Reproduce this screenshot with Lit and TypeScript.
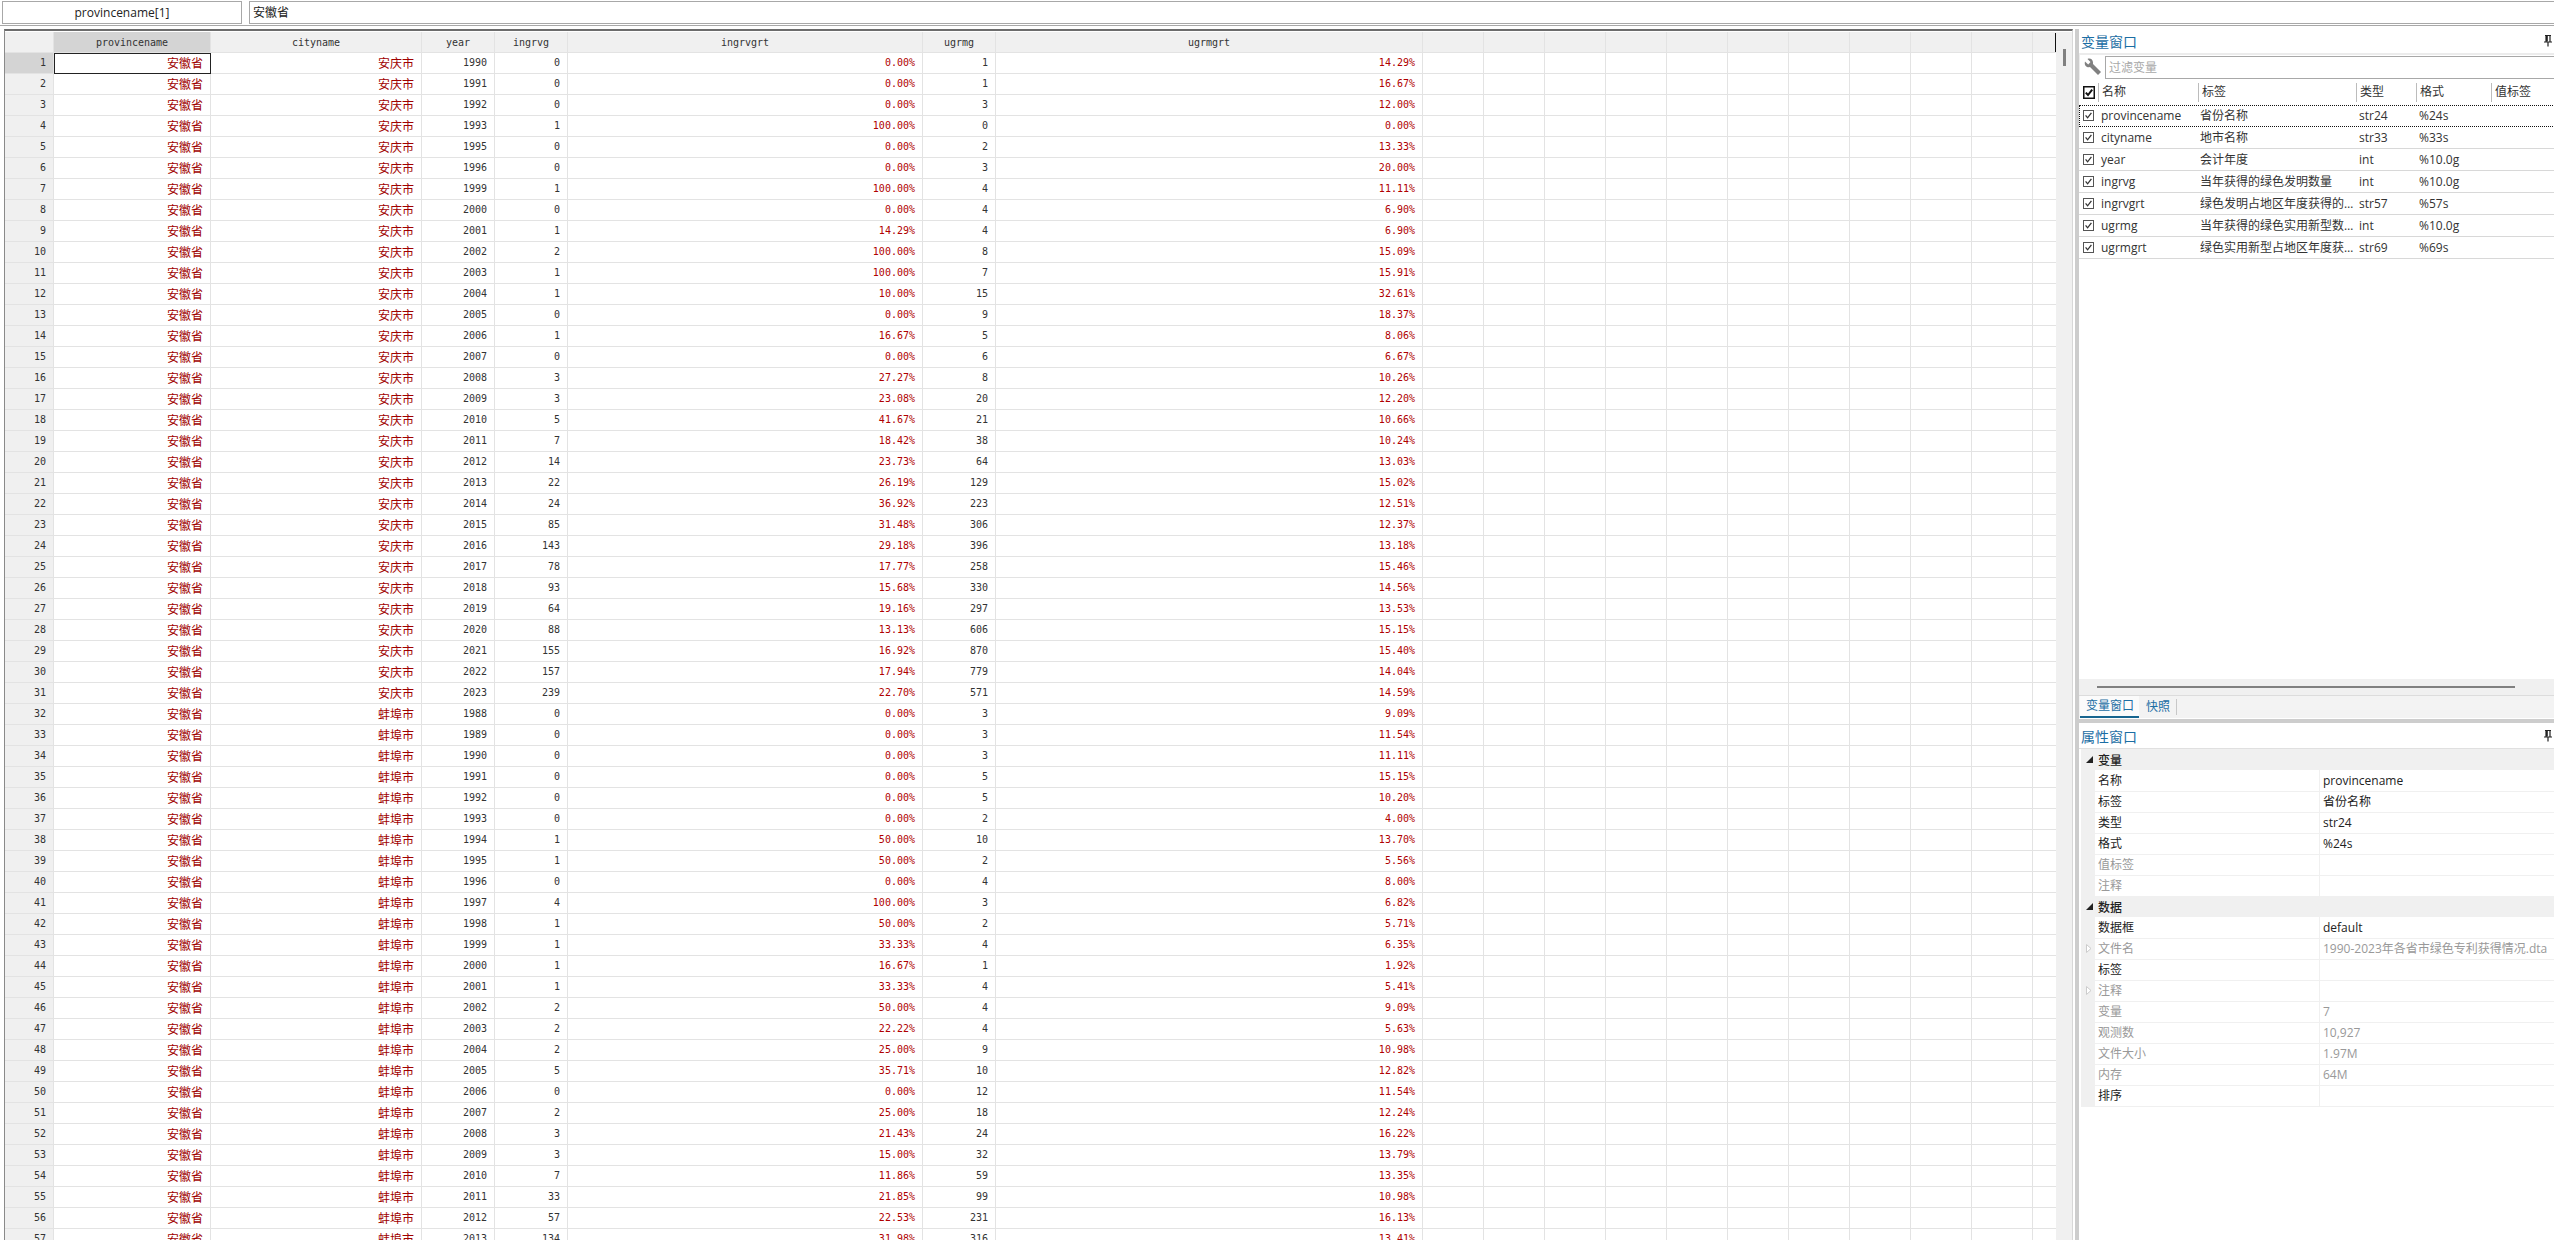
import { LitElement, html, css, svg } from "lit";
import { customElement } from "lit/decorators.js";

const raw = `1990 0 0.00 1 14.29|1991 0 0.00 1 16.67|1992 0 0.00 3 12.00|1993 1 100.00 0 0.00|1995 0 0.00 2 13.33|1996 0 0.00 3 20.00|1999 1 100.00 4 11.11|2000 0 0.00 4 6.90|2001 1 14.29 4 6.90|2002 2 100.00 8 15.09|2003 1 100.00 7 15.91|2004 1 10.00 15 32.61|2005 0 0.00 9 18.37|2006 1 16.67 5 8.06|2007 0 0.00 6 6.67|2008 3 27.27 8 10.26|2009 3 23.08 20 12.20|2010 5 41.67 21 10.66|2011 7 18.42 38 10.24|2012 14 23.73 64 13.03|2013 22 26.19 129 15.02|2014 24 36.92 223 12.51|2015 85 31.48 306 12.37|2016 143 29.18 396 13.18|2017 78 17.77 258 15.46|2018 93 15.68 330 14.56|2019 64 19.16 297 13.53|2020 88 13.13 606 15.15|2021 155 16.92 870 15.40|2022 157 17.94 779 14.04|2023 239 22.70 571 14.59|1988 0 0.00 3 9.09|1989 0 0.00 3 11.54|1990 0 0.00 3 11.11|1991 0 0.00 5 15.15|1992 0 0.00 5 10.20|1993 0 0.00 2 4.00|1994 1 50.00 10 13.70|1995 1 50.00 2 5.56|1996 0 0.00 4 8.00|1997 4 100.00 3 6.82|1998 1 50.00 2 5.71|1999 1 33.33 4 6.35|2000 1 16.67 1 1.92|2001 1 33.33 4 5.41|2002 2 50.00 4 9.09|2003 2 22.22 4 5.63|2004 2 25.00 9 10.98|2005 5 35.71 10 12.82|2006 0 0.00 12 11.54|2007 2 25.00 18 12.24|2008 3 21.43 24 16.22|2009 3 15.00 32 13.79|2010 7 11.86 59 13.35|2011 33 21.85 99 10.98|2012 57 22.53 231 16.13|2013 134 31.98 316 13.41`;
const rows = raw.split("|").map((r) => r.split(" "));
const headers = ["provincename", "cityname", "year", "ingrvg", "ingrvgrt", "ugrmg", "ugrmgrt"];
const blanks = Array.from({ length: 11 });

const vars = [
  ["provincename", "省份名称", "str24", "%24s"],
  ["cityname", "地市名称", "str33", "%33s"],
  ["year", "会计年度", "int", "%10.0g"],
  ["ingrvg", "当年获得的绿色发明数量", "int", "%10.0g"],
  ["ingrvgrt", "绿色发明占地区年度获得的专利比例", "str57", "%57s"],
  ["ugrmg", "当年获得的绿色实用新型数量合计", "int", "%10.0g"],
  ["ugrmgrt", "绿色实用新型占地区年度获得的比例", "str69", "%69s"],
];

type Prop = { k: string; v?: string; dim?: boolean; open?: boolean };
const varProps: Prop[] = [
  { k: "名称", v: "provincename" },
  { k: "标签", v: "省份名称" },
  { k: "类型", v: "str24" },
  { k: "格式", v: "%24s" },
  { k: "值标签", dim: true },
  { k: "注释", dim: true },
];
const dataProps: Prop[] = [
  { k: "数据框", v: "default" },
  { k: "文件名", v: "1990-2023年各省市绿色专利获得情况.dta", dim: true, open: true },
  { k: "标签" },
  { k: "注释", dim: true, open: true },
  { k: "变量", v: "7", dim: true },
  { k: "观测数", v: "10,927", dim: true },
  { k: "文件大小", v: "1.97M", dim: true },
  { k: "内存", v: "64M", dim: true },
  { k: "排序" },
];

const pin = svg`<path d="M2 0.5H8M3 1V6.500M7 1V6.500M1 7H9M5 7V11.500" fill="none" stroke="#222" stroke-width="1.200"/><rect x="3" y="1" width="1.800" height="5.500" fill="#222"/>`;

@customElement("app-root")
export class AppRoot extends LitElement {
  static styles = css`
    :host {
      display: block;
      width: 2554px;
      height: 1240px;
      overflow: hidden;
      background: #fff;
      font-family: "Open Sans", "Noto Sans CJK SC", sans-serif;
      font-size: 12px;
      color: #222;
    }
    * { box-sizing: border-box; }
    .cmd {
      display: flex;
      gap: 7px;
      height: 26px;
      padding: 1px 0 0 2px;
      border-bottom: 1px solid #a8a8a8;
    }
    .cmdname, .cmdval {
      height: 23px;
      border: 1px solid #a8a8a8;
      display: flex;
      align-items: center;
      line-height: 20px;
    }
    .cmdname { width: 240px; justify-content: center; }
    .cmdval { flex: 1; padding-left: 3px; border-right: 0; }
    .main { display: flex; height: 1214px; padding-top: 3px; }

    .gridwrap {
      width: 2069px;
      margin-left: 4px;
      flex: none;
      display: flex;
      border-top: 2px solid #6c6c6c;
      border-left: 1px solid #8a8a8a;
      border-right: 1px solid #d8d8d8;
      padding-top: 1px;
      overflow: hidden;
      height: 1211px;
    }
    .grid { width: 2050px; flex: none; }
    .row {
      display: grid;
      grid-template-columns: 49px 157px 211px 73px 73px 355px 73px 427px repeat(10, 61px) 23px;
      height: 21px;
    }
    .c {
      border-right: 1px solid #e3e3e3;
      border-bottom: 1px solid #e3e3e3;
      font: 10px/20px "DejaVu Sans Mono", monospace;
      padding-right: 7px;
      text-align: right;
      color: #333;
      white-space: nowrap;
      overflow: hidden;
    }
    .c:last-child { border-right: 0; }
    .cjk { font: 12px/20px "Noto Sans CJK SC", sans-serif; color: #a00000; }
    .pct { color: #b00000; }
    .hd { background: #f0f0f0; text-align: center; padding: 0; color: #333; }
    .rowno { background: #f0f0f0; }
    .sel { background: #d4d4d4; }
    .cur { outline: 1.5px solid #222; outline-offset: -1.5px; }
    .head { height: 21px; }
    .head .c { height: 21px; line-height: 21px; }
    .end { position: relative; }
    .end::after {
      content: "";
      position: absolute;
      right: 0;
      top: 1px;
      width: 1px;
      height: 19px;
      background: #111;
    }
    .vscroll { flex: 1; background: #f0f0f0; position: relative; margin-left: 1px; }
    .thumb { position: absolute; left: 7px; top: 17px; width: 3px; height: 17px; background: #808080; }

    .sash { width: 6px; flex: none; background: linear-gradient(to right, #fff 2px, #cdcdcd 2px); }

    .side { flex: 1; min-width: 0; display: flex; flex-direction: column; margin-top: -3px; }
    .vars { height: 669px; flex: none; display: flex; flex-direction: column; }
    .title {
      height: 27px;
      display: flex;
      align-items: center;
      justify-content: space-between;
      padding: 3px 1px 0 2px;
      font-size: 14px;
      color: #1c6ea4;
      flex: none;
    }
    .title svg { width: 10px; height: 12px; flex: none; }
    .filter {
      height: 27px;
      flex: none;
      display: flex;
      gap: 3px;
      padding: 1px 0 1px 4px;
      border-top: 2px solid #ececec;
      border-left: 1px solid #ececec;
    }
    .filter svg { width: 18px; height: 18px; margin-top: 2px; flex: none; }
    .input {
      flex: 1;
      border: 1px solid #a8a8a8;
      border-right: 0;
      padding-left: 3px;
      color: #a8a8a8;
      line-height: 21px;
    }
    .vhead, .vrow {
      display: grid;
      grid-template-columns: 19px 100px 158px 60px 75px 1fr;
    }
    .vhead { height: 25px; align-items: center; flex: none; padding-bottom: 1px; }
    .vhead .chk { padding-left: 4px; height: 19px; display: flex; align-items: center; }
    .vh { height: 19px; border-left: 1px solid #bcbcbc; padding-left: 3px; line-height: 18px; font-size: 12px; color: #333; }
    .vrow { height: 22px; align-items: center; border-bottom: 1px solid #d8d8d8; flex: none; color: #333; line-height: 20px; }
    .vrow.focus { outline: 1px dotted #111; outline-offset: -1px; margin-right: -3px; border-bottom-color: transparent; }
    .vrow .chk { padding-left: 4px; display: flex; align-items: center; }
    .vrow .name { padding-left: 3px; }
    .vrow .label { padding-left: 2px; white-space: nowrap; overflow: hidden; text-overflow: ellipsis; width: 156px; }
    .vrow .type { padding-left: 3px; }
    .vrow .fmt { padding-left: 3px; }
    .chk svg { display: block; }
    .vspacer { flex: 1; }
    .hscroll { height: 16px; flex: none; background: #f0f0f0; padding: 7px 39px 0 18px; }
    .hthumb { height: 2px; background: #808080; }
    .tabs {
      height: 24px;
      flex: none;
      display: flex;
      background: #f3f3f3;
      border-top: 1px solid #dcdcdc;
      border-bottom: 1px solid #fff;
      white-space: nowrap;
    }
    .tab { line-height: 20px; color: #1c6ea4; }
    .tab.on { width: 59px; margin-left: 1px; padding-left: 6px; background: #fbfbfb; border-bottom: 2px solid #17658f; }
    .tab.off { height: 16px; line-height: 16px; margin: 3px 0 0 1px; border-right: 1px solid #c8c8c8; padding: 0 6px; }
    .band { height: 4px; background: #cdcdcd; flex: none; }
    .props { flex: 1; display: flex; flex-direction: column; }
    .ptitle { height: 26px; padding-top: 0; border-bottom: 1px solid #e0e0e0; }
    .sec {
      height: 21px;
      display: flex;
      align-items: center;
      margin-left: 2px;
      padding-left: 5px;
      gap: 5px;
      background: #f0f0f0;
      color: #222;
      font-weight: 500;
    }
    .sec svg { width: 7px; height: 7px; flex: none; }
    .prow {
      display: grid;
      grid-template-columns: 14px 225px 1fr;
      height: 21px;
      margin-left: 2px;
      line-height: 21px;
    }
    .gut { background: #f0f0f0; padding: 6px 0 0 5px; }
    .gut svg { display: block; width: 6px; height: 9px; }
    .pk { padding-left: 3px; border-bottom: 1px solid #f0f0f0; border-right: 1px solid #f0f0f0; }
    .pv { padding-left: 3px; border-bottom: 1px solid #f0f0f0; white-space: nowrap; overflow: hidden; }
    .dim { color: #999; }
    .last .pk, .last .pv { border-bottom-color: #dcdcdc; }
  `;

  private check(head = false) {
    return head
      ? html`<svg width="12" height="13" viewBox="0 0 12 13"><rect x=".75" y=".75" width="10.500" height="11.500" fill="#fff" stroke="#111" stroke-width="1.500"/><path d="M2.800 6.600 5 9l4.200-5.400" fill="none" stroke="#111" stroke-width="2"/></svg>`
      : html`<svg width="11" height="11" viewBox="0 0 11 11"><rect x=".5" y=".5" width="10" height="10" fill="#fff" stroke="#555"/><path d="M2.600 5.400 4.600 7.800l3.800-5" fill="none" stroke="#333" stroke-width="1.300"/></svg>`;
  }

  private prop(p: Prop, last = false) {
    const dim = p.dim ? "dim" : "";
    return html`<div class="prow ${last ? "last" : ""}">
      <div class="gut">
        ${p.open
          ? html`<svg viewBox="0 0 6 9"><path d="M.5.5 5 4.500.5 8.500Z" fill="#fff" stroke="#ccc"/></svg>`
          : ""}
      </div>
      <div class="pk ${dim}">${p.k}</div>
      <div class="pv ${dim}">${p.v ?? ""}</div>
    </div>`;
  }

  render() {
    const tri = html`<svg viewBox="0 0 7 7"><path d="M7 0V7H0Z" fill="#222"/></svg>`;
    return html`
      <div class="cmd">
        <div class="cmdname">provincename[1]</div>
        <div class="cmdval">安徽省</div>
      </div>
      <div class="main">
        <div class="gridwrap">
          <div class="grid">
            <div class="row head">
              <div class="c hd"></div>
              ${headers.map((h, i) => html`<div class="c hd ${i === 0 ? "sel" : ""}">${h}</div>`)}
              ${blanks.map((_, i) => html`<div class="c hd ${i === 10 ? "end" : ""}"></div>`)}
            </div>
            ${rows.map(
              (r, i) => html`<div class="row">
                <div class="c rowno ${i === 0 ? "sel" : ""}">${i + 1}</div>
                <div class="c cjk ${i === 0 ? "cur" : ""}">安徽省</div>
                <div class="c cjk">${i < 31 ? "安庆市" : "蚌埠市"}</div>
                <div class="c">${r[0]}</div>
                <div class="c">${r[1]}</div>
                <div class="c pct">${r[2]}%</div>
                <div class="c">${r[3]}</div>
                <div class="c pct">${r[4]}%</div>
                ${blanks.map(() => html`<div class="c"></div>`)}
              </div>`
            )}
          </div>
          <div class="vscroll"><div class="thumb"></div></div>
        </div>
        <div class="sash"></div>
        <div class="side">
          <div class="vars">
            <div class="title"><span>变量窗口</span><svg viewBox="0 0 10 12">${pin}</svg></div>
            <div class="filter">
              <svg viewBox="0 0 18 18"><path d="M6 6 15.500 15.500" stroke="#808080" stroke-width="4.200" fill="none"/><path d="M1 3.500 4.200 6.500 6.500 4 3.500 1C6-.3 9.500 1.500 9 5.500 8.800 8 6 10 3 9 1 8 .3 6 1 3.500Z" fill="#808080"/></svg>
              <div class="input">过滤变量</div>
            </div>
            <div class="vhead">
              <div class="chk">${this.check(true)}</div>
              <div class="vh">名称</div>
              <div class="vh">标签</div>
              <div class="vh">类型</div>
              <div class="vh">格式</div>
              <div class="vh">值标签</div>
            </div>
            ${vars.map(
              (v, i) => html`<div class="vrow ${i === 0 ? "focus" : ""}">
                <div class="chk">${this.check()}</div>
                <div class="name">${v[0]}</div>
                <div class="label">${v[1]}</div>
                <div class="type">${v[2]}</div>
                <div class="fmt">${v[3]}</div>
                <div></div>
              </div>`
            )}
            <div class="vspacer"></div>
            <div class="hscroll"><div class="hthumb"></div></div>
          </div>
          <div class="tabs">
            <div class="tab on">变量窗口</div>
            <div class="tab off">快照</div>
          </div>
          <div class="band"></div>
          <div class="props">
            <div class="title ptitle"><span>属性窗口</span><svg viewBox="0 0 10 12">${pin}</svg></div>
            <div class="sec">${tri}<span>变量</span></div>
            ${varProps.map((p, i) => this.prop(p, i === varProps.length - 1))}
            <div class="sec">${tri}<span>数据</span></div>
            ${dataProps.map((p) => this.prop(p))}
          </div>
        </div>
      </div>
    `;
  }
}
